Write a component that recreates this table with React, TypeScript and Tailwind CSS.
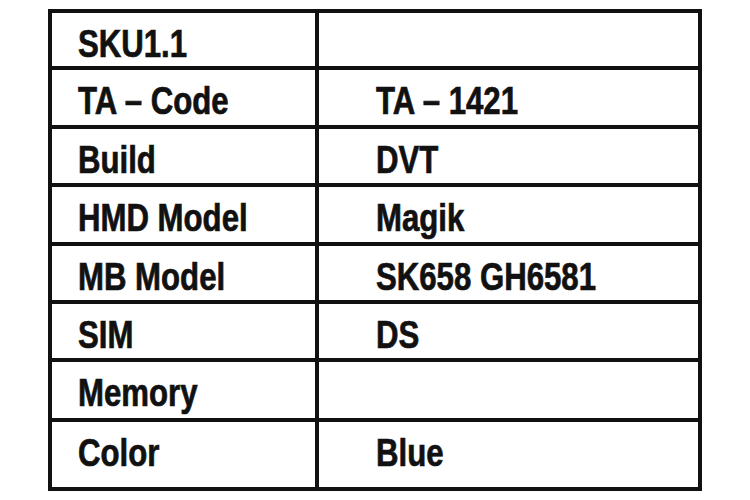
const ROWS: { label: string; value: string; h: string }[] = [
  { label: "SKU1.1", value: "", h: "h-[53px]" },
  { label: "TA – Code", value: "TA – 1421", h: "h-[59px]" },
  { label: "Build", value: "DVT", h: "h-[58px]" },
  { label: "HMD Model", value: "Magik", h: "h-[59px]" },
  { label: "MB Model", value: "SK658 GH6581", h: "h-[58px]" },
  { label: "SIM", value: "DS", h: "h-[58px]" },
  { label: "Memory", value: "", h: "h-[60px]" },
  { label: "Color", value: "Blue", h: "h-[69px]" },
];

// condensed bold face: Liberation Sans squeezed horizontally
function Txt({ children }: { children: string }) {
  return (
    <span className="inline-block origin-left scale-x-[0.82] whitespace-nowrap [-webkit-text-stroke:0.7px_#111]">
      {children}
    </span>
  );
}

export default function App() {
  return (
    <div className="min-h-[500px] w-[750px] bg-white pt-[9px] pl-[48px]">
      <div className="w-[654px] border-4 border-[#111] font-['Liberation_Sans',Arial,sans-serif] text-[38px] leading-[38px] font-bold text-[#111]">
        {ROWS.map((row, i) => (
          <div
            key={row.label}
            className={`grid grid-cols-[267px_1fr] ${row.h} ${i > 0 ? "border-t-4 border-[#111]" : ""}`}
          >
            <div className="border-r-4 border-[#111] pl-[26px] pt-[12px]">
              <Txt>{row.label}</Txt>
            </div>
            <div className="pl-[57px] pt-[12px]">{row.value && <Txt>{row.value}</Txt>}</div>
          </div>
        ))}
      </div>
    </div>
  );
}
